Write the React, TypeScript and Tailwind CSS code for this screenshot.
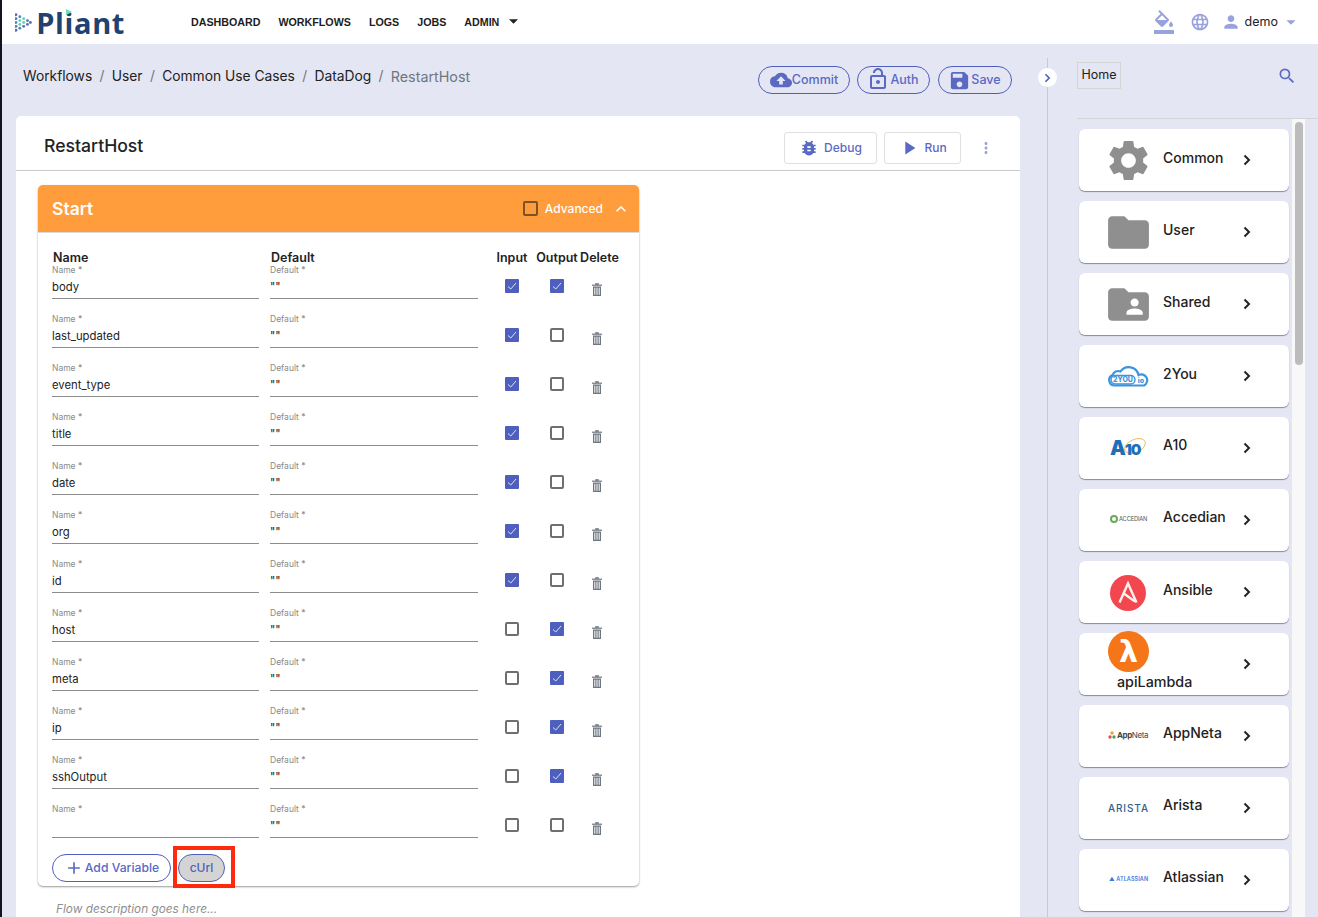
import React from "react";
import {
  MdFormatColorFill, MdLanguage, MdPerson, MdArrowDropDown, MdCloudUpload, MdOutlineLockOpen, MdSave,
  MdBugReport, MdPlayArrow, MdMoreVert, MdSearch, MdSettings, MdFolder, MdFolderShared, MdAdd, MdExpandLess,
} from "react-icons/md";

const rows: [string, boolean, boolean][] = [
  ["body", true, true], ["last_updated", true, false], ["event_type", true, false], ["title", true, false],
  ["date", true, false], ["org", true, false], ["id", true, false], ["host", false, true],
  ["meta", false, true], ["ip", false, true], ["sshOutput", false, true], ["", false, false],
];

function Chevron({ className = "" }: { className?: string }) {
  return (
    <svg viewBox="0 0 8 12" className={"w-2 h-3 " + className} fill="none" stroke="currentColor" strokeWidth="2">
      <path d="M1.5 1.5 6 6l-4.500 4.500" />
    </svg>
  );
}

function Check({ on }: { on: boolean }) {
  return on ? (
    <div className="w-[14px] h-[14px] rounded-[1px] bg-[#4f5fbd] flex items-center justify-center">
      <svg viewBox="0 0 14 14" className="w-[14px] h-[14px]" fill="none" stroke="#dfe3f7" strokeWidth="1">
        <path d="M3 7.500 5.800 10 11 4" />
      </svg>
    </div>
  ) : (
    <div className="w-[14px] h-[14px] rounded-[2px] border-2 border-[#6f6f6f] bg-white" />
  );
}

function Trash() {
  return (
    <svg viewBox="0 0 10 13" className="w-[10px] h-[13px]" fill="#6e7680">
      <rect x="0" y="1.600" width="10" height="1.200" />
      <rect x="3.200" y="0.200" width="3.600" height="1.600" />
      <path d="M1 3.600h8V13H1z M2.300 4.800v7h1v-7z M4.500 4.800v7h1v-7z M6.700 4.800v7h1v-7z" fillRule="evenodd" />
    </svg>
  );
}

function Field({ label, value, width }: { label: string; value: string; width: string }) {
  return (
    <div className={"shrink-0 " + width}>
      <div className="h-3 text-[8.5px] leading-3 text-[#8a8a8a]">{label} *</div>
      <div className="h-[23px] border-b border-[#8c8c8c] text-[#222] text-[11.300px] leading-[22px]">{value}</div>
    </div>
  );
}

function Row({ name, input, output }: { name: string; input: boolean; output: boolean }) {
  return (
    <div className="flex h-[49px]">
      <Field label="Name" value={name} width="w-[207px] mr-[11px]" />
      <Field label="Default" value={'""'} width="w-[208px]" />
      <div className="w-[68px] shrink-0 flex justify-center pt-[15px]"><Check on={input} /></div>
      <div className="w-[22px] shrink-0 flex justify-center pt-[15px]"><Check on={output} /></div>
      <div className="w-[58px] shrink-0 flex justify-center pt-[19px]"><div><Trash /></div></div>
    </div>
  );
}

function Pill({ icon, label, className }: { icon: React.ReactNode; label: string; className: string }) {
  return (
    <button className={"h-7 rounded-full border border-[#4f5fbd] flex items-center justify-center text-[12.500px] font-medium text-[#5a69c4] " + className}>
      {icon}
      {label}
    </button>
  );
}

function PliantLogo() {
  const dots: [number, number, string][] = [
    [1, 2, "#5b6fae"], [1, 6, "#5b6fae"], [1, 10, "#4c8fb0"], [1, 14, "#5b6fae"], [1, 18, "#5b6fae"],
    [5, 4, "#4c8fb0"], [5, 8, "#5fd3b0"], [5, 12, "#5fd3b0"], [5, 16, "#4c8fb0"],
    [9, 6, "#5fd3b0"], [9, 10, "#5fd3b0"], [9, 14, "#5b6fae"], [13, 8, "#5b6fae"], [13, 12, "#5b6fae"], [16, 10, "#5b6fae"],
  ];
  return (
    <div className="flex items-center w-[110px] ml-[13px] relative">
      <svg viewBox="0 0 18 20" className="w-[18px] h-[21px] mt-[1px]">
        {dots.map(([x, y, c], i) => <circle key={i} cx={x} cy={y} r="1.500" fill={c} />)}
      </svg>
      <span className="ml-[4px] text-[29px] leading-none font-bold tracking-[0.6px] text-[#1f4270] font-['Open_Sans','Liberation_Sans',sans-serif]">Pliant</span>
      <svg viewBox="0 0 6 6" className="absolute left-[51px] top-[1px] w-[6px] h-[6px]"><path d="M0 0l6 3-6 3z" fill="#6fe0b8" /></svg>
    </div>
  );
}

const gray = "text-[#8f8f8f]";

const logos: Record<string, React.ReactNode> = {
  Common: <MdSettings className={"w-[49px] h-[49px] -mx-1 " + gray} />,
  User: <MdFolder className={"w-[49px] h-[49px] -mx-1 " + gray} />,
  Shared: <MdFolderShared className={"w-[49px] h-[49px] -mx-1 " + gray} />,
  "2You": (
    <svg viewBox="0 0 41 22" className="w-[41px] h-[22px]">
      <path d="M6 20.500a5.500 5.500 0 0 1-1.500-10.500 6 6 0 0 1 8-3.500 10 10 0 0 1 18 3.500 5.500 5.500 0 0 1 5.500 10.500z" fill="#fff" stroke="#3d94dc" strokeWidth="2.200" />
      <rect x="3" y="10.500" width="24" height="8.500" rx="4.200" fill="#fff" stroke="#3d94dc" strokeWidth="1.400" />
      <text x="15" y="17.300" textAnchor="middle" fontSize="7" fontWeight="800" fill="#3d94dc" fontFamily="Inter">2YOU</text>
      <text x="33" y="18" textAnchor="middle" fontSize="7" fontWeight="800" fill="#3d94dc" fontFamily="Inter">io</text>
    </svg>
  ),
  A10: (
    <svg viewBox="0 0 41 24" className="w-[41px] h-[24px]">
      <ellipse cx="27" cy="10" rx="11" ry="6.500" fill="none" stroke="#e9b24a" strokeWidth="0.800" transform="rotate(-25 27 10)" />
      <text x="2" y="19" fontWeight="900" fill="#1f6fb8" fontFamily="Inter" letterSpacing="-1"><tspan fontSize="20">A</tspan><tspan fontSize="15">10</tspan></text>
    </svg>
  ),
  Accedian: (
    <div className="flex items-center pl-[2px] -mt-[2px] whitespace-nowrap">
      <div className="w-2 h-2 shrink-0 rounded-full border-2 border-[#6aa85f]" />
      <span className="text-[5.800px] ml-[1px] tracking-[-0.2px] text-[#555] font-['Inter',sans-serif]">ACCEDIAN</span>
    </div>
  ),
  Ansible: (
    <svg viewBox="0 0 36 36" className="w-9 h-9 ml-[2px] mt-[2px]">
      <circle cx="18" cy="18" r="18" fill="#f2474f" />
      <path d="M9.500 27.500 18 8.500l8.500 19M14.500 19l10.500 7.500" fill="none" stroke="#fff0f0" strokeWidth="2.400" />
    </svg>
  ),
  AppNeta: (
    <div className="flex items-center -mt-[3px] whitespace-nowrap">
      <svg viewBox="0 0 8 8" className="w-2 h-2 shrink-0"><circle cx="4" cy="2" r="1.700" fill="#e8a33a" /><circle cx="2" cy="6" r="1.700" fill="#d9534f" /><circle cx="6" cy="6" r="1.700" fill="#4f9e62" /></svg>
      <span className="text-[8px] ml-[1px] tracking-[-0.4px] text-[#444] font-['Inter',sans-serif]"><b>App</b>Neta</span>
    </div>
  ),
  Arista: <span className="text-[10px] tracking-[0.9px] font-medium whitespace-nowrap text-[#2f6089] font-['Inter',sans-serif]">ARISTA</span>,
  Atlassian: <span className="text-[5.500px] font-semibold tracking-[0.1px] pl-[1px] -mt-[2px] whitespace-nowrap text-[#3b78e0] font-['Inter',sans-serif]">▲ ATLASSIAN</span>,
};

const items: [string, string][] = [
  ["Common", "-mt-[4px]"], ["User", "-mt-[4px]"], ["Shared", "-mt-[4px]"], ["2You", "-mt-[4px]"], ["A10", "-mt-[6px]"],
  ["Accedian", "-mt-[6px]"], ["Ansible", "-mt-[4px]"], ["apiLambda", ""], ["AppNeta", "-mt-[6px]"], ["Arista", "-mt-[6px]"], ["Atlassian", "-mt-[6px]"],
];

function ListCard({ name, mt }: { name: string; mt: string }) {
  const base = "h-[62px] w-[210px] rounded-[6px] bg-white shadow-[0_1px_1px_rgba(60,60,90,0.55)] flex items-center pl-[29px] text-[#222]";
  if (name === "apiLambda") {
    return (
      <div className={base}>
        <div className="w-[135px] flex flex-col h-[62px] shrink-0">
          <div className="w-[41px] h-[41px] -mt-[2px] rounded-full bg-[#f57618] text-white flex items-center justify-center text-[30px] font-bold leading-none font-['DejaVu_Sans',sans-serif]">λ</div>
          <span className="ml-[9px] text-[14.300px] leading-5 font-medium">apiLambda</span>
        </div>
        <Chevron className="text-[#222]" />
      </div>
    );
  }
  return (
    <div className={base}>
      <div className="w-[41px] flex justify-start items-center shrink-0">{logos[name]}</div>
      <span className={"ml-[14px] w-[80px] text-sm font-medium shrink-0 " + mt}>{name}</span>
      <Chevron className="text-[#222]" />
    </div>
  );
}

export default function App() {
  return (
    <div className="h-[917px] overflow-hidden bg-[#e4e6f3] border-l-2 border-[#14141e] font-['Inter','Liberation_Sans',sans-serif] text-[#222]">
      <header className="h-11 bg-white flex items-center -ml-[2px] pl-[2px]">
        <PliantLogo />
        <nav className="ml-[66px] mt-[1px] flex items-center gap-[18px] text-[10.700px] font-bold text-[#1d1d1d] font-['Liberation_Sans',sans-serif]">
          <span>DASHBOARD</span><span>WORKFLOWS</span><span>LOGS</span><span>JOBS</span>
          <span className="flex items-center">ADMIN<svg viewBox="0 0 10 5" className="w-[9px] h-[5px] ml-[10px] -mt-[2px]"><path d="M0 0h10L5 5z" fill="#222" /></svg></span>
        </nav>
        <div className="ml-auto flex items-center text-[#98a2dc]">
          <MdFormatColorFill className="w-[24px] h-[24px] mr-[14px]" />
          <MdLanguage className="w-[20px] h-[20px] mr-[11px]" />
          <MdPerson className="w-[20px] h-[20px] mr-[4px]" />
          <span className="text-[12.500px] text-[#222] mr-[2px]">demo</span>
          <MdArrowDropDown className="w-[22px] h-[22px] mr-[16px]" />
        </div>
      </header>

      <div className="flex">
        <main className="w-[1045px] shrink-0 pl-[14px] pr-[27px]">
          <div className="h-[72px] flex items-center">
            <div className="pl-[7px] -mt-[6px] text-[13.800px] text-[#222] flex gap-[7.300px]">
              <span>Workflows</span><span className="text-[#777]">/</span>
              <span>User</span><span className="text-[#777]">/</span>
              <span>Common Use Cases</span><span className="text-[#777]">/</span>
              <span>DataDog</span><span className="text-[#777]">/</span>
              <span className="text-[14.300px] text-[#6f7680]">RestartHost</span>
            </div>
            <div className="ml-auto mr-2 flex items-center">
              <Pill icon={<MdCloudUpload className="w-[22px] h-[22px]" />} label="Commit" className="w-[92px] mr-[7px]" />
              <Pill icon={<MdOutlineLockOpen className="w-[24px] h-[24px] -mt-[2px] -ml-[2px]" />} label="Auth" className="w-[73px] mr-2" />
              <Pill icon={<MdSave className="w-[23px] h-[23px] -ml-[1px]" />} label="Save" className="w-[74px]" />
            </div>
          </div>

          <section className="bg-white rounded-[5px] h-[820px]">
            <div className="h-[55px] border-b border-[#c9c9c9] flex items-center pt-[10px] pl-7 pr-[25px]">
              <h1 className="text-[17.600px] font-medium text-[#222] -mt-[3px]">RestartHost</h1>
              <button className="ml-auto w-[93px] h-8 rounded-[3px] border border-[#e0e0e0] flex items-center justify-center text-xs font-medium text-[#5a69c4] mr-[7px]">
                <MdBugReport className="w-5 h-5 mr-[5px]" />Debug
              </button>
              <button className="w-[77px] h-8 rounded-[3px] border border-[#e0e0e0] flex items-center justify-center text-xs font-medium text-[#5a69c4] mr-4">
                <MdPlayArrow className="w-[22px] h-[22px] mr-1" />Run
              </button>
              <MdMoreVert className="w-[18px] h-[18px] text-[#98a2dc]" />
            </div>

            <div className="ml-[22px] mt-[14px] w-[601px] rounded-[5px] shadow-[0_1px_2px_rgba(0,0,0,0.4)]">
              <div className="h-[48px] rounded-t-[5px] bg-[#ff9c3b] border-b border-[#d9d9d9] flex items-center pl-[14px] pr-2 text-white">
                <span className="text-[17.500px] font-semibold mt-[1px]">Start</span>
                <div className="ml-auto w-[15px] h-[15px] border-2 border-[#7a5326] rounded-[2px]" />
                <span className="ml-[7px] text-xs font-medium">Advanced</span>
                <MdExpandLess className="w-5 h-5 ml-2" />
              </div>
              <div className="px-[14px] pb-1 rounded-b-[5px]">
                <div className="flex h-[31px] pt-[18px] text-[12.500px] leading-[14px] font-semibold text-[#222]">
                  <div className="w-[218px] shrink-0 pl-[1px]">Name</div>
                  <div className="w-[208px] shrink-0 pl-[1px]">Default</div>
                  <div className="w-[68px] shrink-0 flex justify-center">Input</div>
                  <div className="w-[22px] shrink-0 flex justify-center whitespace-nowrap">Output</div>
                  <div className="w-[63px] shrink-0 flex justify-center">Delete</div>
                </div>
                {rows.map((r, i) => <Row key={i} name={r[0]} input={r[1]} output={r[2]} />)}
                <div className="flex items-center pt-[2px]">
                  <button className="w-[119px] h-7 rounded-full border border-[#4f5fbd] flex items-center justify-center text-[12.200px] font-medium text-[#5a69c4]">
                    <MdAdd className="w-[20px] h-[20px] mr-[1px]" />Add Variable
                  </button>
                  <div className="relative ml-[7px]">
                    <button className="w-[47px] h-7 rounded-full border border-[#4f5fbd] bg-[#d4d4d4] text-xs font-medium text-[#4f5fbd]">cUrl</button>
                    <div className="absolute left-[-5px] top-[-8px] w-[62px] h-[42px] border-4 border-[#ff2a0e]" />
                  </div>
                </div>
              </div>
            </div>
            <p className="ml-[40px] mt-[15px] text-[11.800px] italic text-[#8f8f8f]">Flow description goes here...</p>
          </section>
        </main>

        <aside className="relative mt-[14px] w-[271px] shrink-0 border-l border-[#c8c9d2]">
          <div className="absolute left-[-10px] top-[10px] w-[19px] h-[19px] rounded-full bg-white flex items-center justify-center text-[#4f5fbd]">
            <Chevron className="w-[7px] h-[10px]" />
          </div>
          <div className="h-[46px] pl-[29px] pr-[21px] flex items-start">
            <div className="mt-[4px] w-[44px] h-[27px] border border-[#d4d4d4] text-[12.500px] text-[#222] flex items-center justify-center">Home</div>
            <MdSearch className="ml-auto mt-[8px] w-[20px] h-[20px] text-[#5a69c4]" />
          </div>
          <div className="ml-[29px] mt-[14px] border-t border-[#d4d4d4] flex h-[800px]">
            <div className="w-[215px] pl-[2px] pt-[10px] flex flex-col gap-[10px] shrink-0">
              {items.map(([n, m]) => <ListCard key={n} name={n} mt={m} />)}
            </div>
            <div className="w-[13px] bg-[#f8f8f8] pl-[3px] pt-[3px]">
              <div className="w-2 h-[243px] rounded-full bg-[#bcbcbc]" />
            </div>
          </div>
        </aside>
      </div>
    </div>
  );
}
